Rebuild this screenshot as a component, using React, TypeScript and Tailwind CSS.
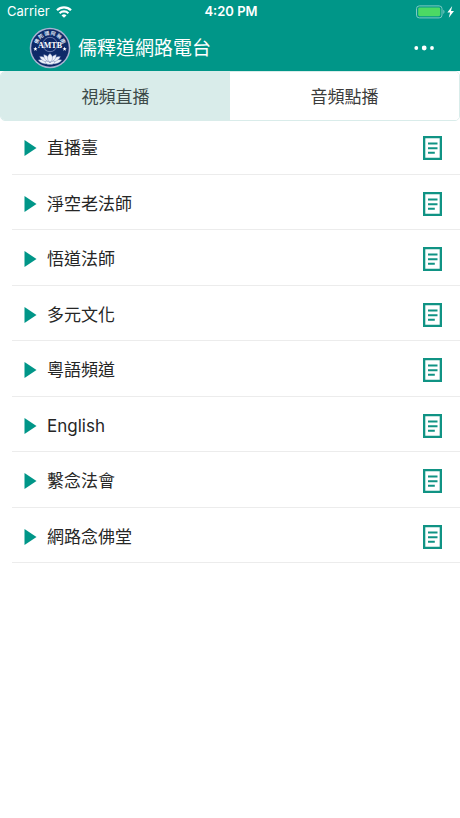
import type { ReactNode } from "react"

const channels = [
    "直播臺",
    "淨空老法師",
    "悟道法師",
    "多元文化",
    "粵語頻道",
    "English",
    "繫念法會",
    "網路念佛堂",
]

const sealLetters = ["佛", "陀", "彌", "阿", "無", "南"]

function WifiIcon() {
    return (
        <svg width="16" height="12" viewBox="0 0 16 12" fill="none" stroke="white" aria-hidden="true">
            <path d="M1 4.3a10 10 0 0 1 14 0" strokeWidth="2.3" />
            <path d="M3.6 7.2a6.3 6.3 0 0 1 8.8 0" strokeWidth="2.1" />
            <path d="M8 11.8 5.5 9.4a3.6 3.6 0 0 1 5 0Z" fill="white" stroke="none" />
        </svg>
    )
}

function BatteryIcon() {
    return (
        <svg width="39" height="14" viewBox="0 0 39 14" aria-hidden="true">
            <rect x="0.5" y="0.9" width="25.5" height="12" rx="2.8" fill="none" stroke="#7fcac2" />
            <rect x="2.2" y="2.6" width="22" height="8.6" rx="1.4" fill="#4cd964" />
            <path d="M27.3 4.8c1.6.7 1.6 3.5 0 4.2Z" fill="#7fcac2" />
            <path d="m36.2 1.1-4.8 6.3h2.7l-1.3 5.4 5.2-6.9h-3Z" fill="white" />
        </svg>
    )
}

function Logo() {
    return (
        <svg width="42" height="42" viewBox="0 0 42 42" aria-hidden="true">
            <circle cx="21" cy="21" r="20.3" fill="#a9b4d3" />
            <circle cx="21" cy="21" r="18.8" fill="#0e2a68" />
            <g fill="#dde5f4" className="font-['Noto_Sans_CJK_TC',sans-serif] text-[5px] font-bold" textAnchor="middle">
                {sealLetters.map((letter, i) => (
                    <text key={letter} x="21" y="8" transform={`rotate(${-62.5 + i * 25} 21 21)`}>
                        {letter}
                    </text>
                ))}
            </g>
            <circle cx="21" cy="17.5" r="7.2" fill="none" stroke="#7d8dbb" strokeWidth="0.8" />
            <text
                x="21"
                y="20.6"
                fill="white"
                textAnchor="middle"
                className="font-['Liberation_Serif',serif] text-[8px] font-bold"
            >
                AMTB
            </text>
            <path d="m6.4 19.8.6 1.5h1.5l-1.2 1 .5 1.5-1.4-.9-1.4.9.5-1.5-1.2-1h1.5Z" fill="white" />
            <path d="m35.6 19.8.6 1.5h1.5l-1.2 1 .5 1.5-1.4-.9-1.4.9.5-1.5-1.2-1h1.5Z" fill="white" />
            <g fill="#eef2fa" stroke="#5c70a6" strokeWidth="0.4">
                <path d="M21 36.8c-5.4.9-9.8-.7-11.8-3.9 4-.8 8.2.3 11.8 3.9Z" />
                <path d="M21 36.8c5.4.9 9.8-.7 11.8-3.9-4-.8-8.2.3-11.8 3.9Z" />
                <path d="M21 35.6c-5.3-.2-9.2-2.6-10.4-6.2 4.6-.2 8.4 2 10.4 6.2Z" />
                <path d="M21 35.6c5.3-.2 9.2-2.6 10.4-6.2-4.6-.2-8.4 2-10.4 6.2Z" />
                <path d="M21 35.3c-4.2-1.2-6.6-4.2-6.2-7.8 3.6.9 6 3.7 6.2 7.8Z" />
                <path d="M21 35.3c4.2-1.2 6.6-4.2 6.2-7.8-3.6.9-6 3.7-6.2 7.8Z" />
                <path d="M21 35.3c-3.3-2.3-3.3-6.4 0-8.7 3.3 2.3 3.3 6.4 0 8.7Z" />
                <path d="M21 37.6c-3.2 0-4.7-1.6-5-3.2 2.4-.6 4.2.3 5 1.5.8-1.2 2.6-2.1 5-1.5-.3 1.6-1.8 3.2-5 3.2Z" />
            </g>
        </svg>
    )
}

function PlayIcon() {
    return (
        <svg width="13" height="16" viewBox="0 0 13 16" fill="#009688" aria-hidden="true">
            <path d="M0.5 0v16L12.5 8Z" />
        </svg>
    )
}

function ListIcon() {
    return (
        <svg width="19" height="24" viewBox="0 0 19 24" fill="none" stroke="#109384" strokeWidth="2.3" aria-hidden="true">
            <path d="M1.15 1.15h16.7v21.7H1.15Z" />
            <path d="M5 7.5h9.5M5 12.2h9.5M5 16.8h6.8" strokeWidth="2" />
        </svg>
    )
}

function StatusBar() {
    return (
        <div className="grid grid-cols-3 items-center h-6 pl-[7px] pr-[5px] text-[13px]">
            <div className="flex items-center gap-[6px]">
                <span>Carrier</span>
                <WifiIcon />
            </div>
            <span className="text-center font-semibold">4:20 PM</span>
            <div className="flex justify-end">
                <BatteryIcon />
            </div>
        </div>
    )
}

function Tab({ selected, children }: { selected?: boolean; children: ReactNode }) {
    return (
        <button
            type="button"
            role="tab"
            aria-selected={!!selected}
            className={
                selected
                    ? "flex-1 pt-1 bg-[#d9ecea] text-[17px] text-[#3c4a49]"
                    : "flex-1 pt-1 bg-white text-[17px] text-[#3c3c3c]"
            }
        >
            {children}
        </button>
    )
}

function ChannelRow({ name }: { name: string }) {
    return (
        <li className="flex items-center h-14 first:h-[54px] even:h-[55px] pt-[3px] first:pt-0 pl-3 pr-[18px] border-b border-[#ececec]">
            <button type="button" className="flex flex-1 items-center gap-[10px] text-left text-[17px] text-[#262626]">
                <PlayIcon />
                <span className="pt-0.5">{name}</span>
            </button>
            <button type="button" aria-label={name}>
                <ListIcon />
            </button>
        </li>
    )
}

export default function App() {
    return (
        <div className="min-h-screen bg-white font-['Inter','Noto_Sans_CJK_TC',sans-serif]">
            <header className="bg-[#009688] text-white">
                <StatusBar />
                <div className="flex items-center h-[47px] pl-[29px] pr-[26px]">
                    <Logo />
                    <h1 className="flex-1 pt-[3px] pl-[7px] text-[19px]">儒釋道網路電台</h1>
                    <button type="button" aria-label="⋯">
                        <svg width="20" height="6" viewBox="0 0 20 6" fill="white" aria-hidden="true">
                            <circle cx="2.3" cy="3" r="1.9" />
                            <circle cx="10.2" cy="3" r="2.4" />
                            <circle cx="18" cy="3" r="1.9" />
                        </svg>
                    </button>
                </div>
            </header>

            <main>
                <div role="tablist" className="flex h-[50px] overflow-hidden rounded-[5px] border border-[#d9ecea]">
                    <Tab selected>視頻直播</Tab>
                    <Tab>音頻點播</Tab>
                </div>
                <ul className="pl-3">
                    {channels.map((name) => (
                        <ChannelRow key={name} name={name} />
                    ))}
                </ul>
            </main>
        </div>
    )
}
